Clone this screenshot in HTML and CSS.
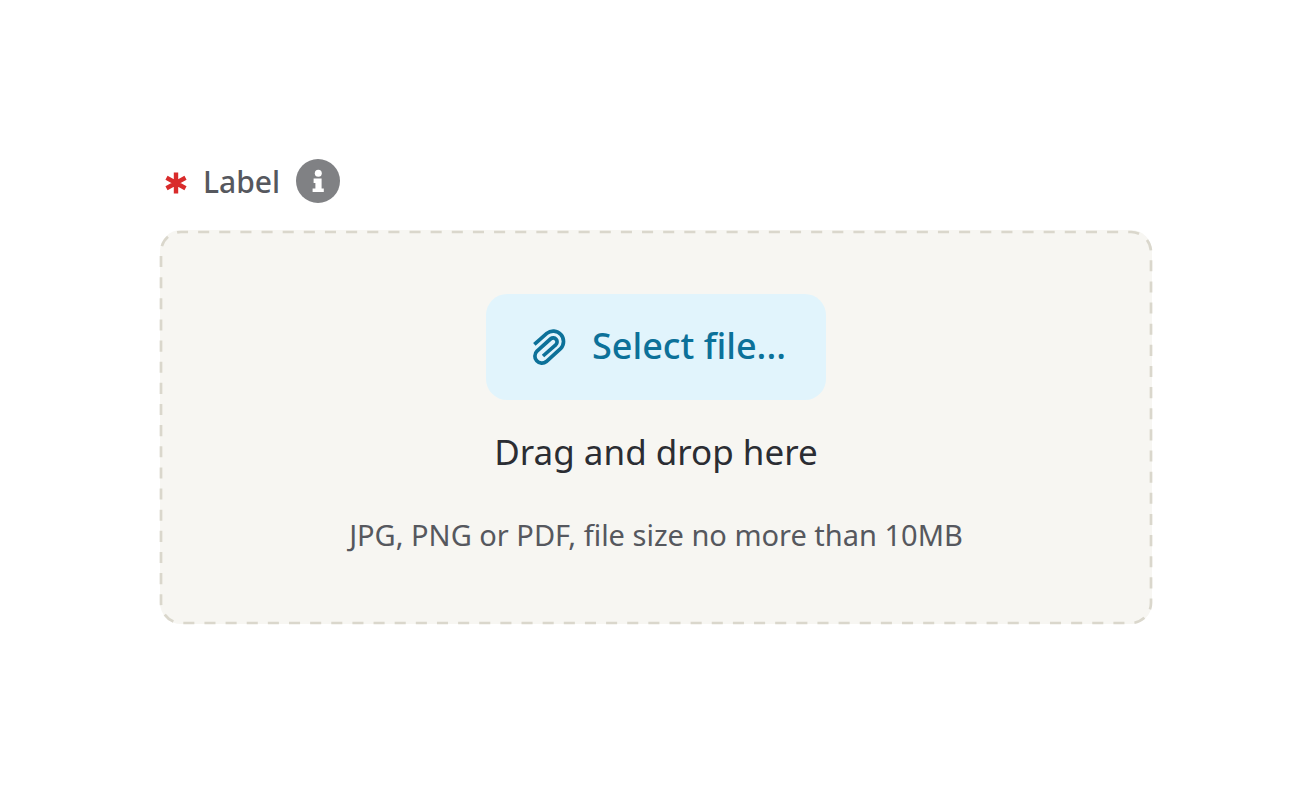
FILE: index.html
```
<!DOCTYPE html>
<html lang="en">
<head>
  <meta charset="UTF-8">
  <meta name="viewport" content="width=device-width, initial-scale=1.0">
  <title>File upload</title>
  <link rel="stylesheet" href="styles.css">
</head>
<body>
  <main class="upload">
    <div class="upload-header">
      <svg class="required-icon" viewBox="0 0 22 26" aria-hidden="true">
        <path d="M11 4.5V25.5M1.5 9.8L20.5 20.2M20.5 9.8L1.5 20.2"/>
      </svg>
      <label for="file">Label</label>
      <button type="button" class="info" aria-label="More information">
        <svg viewBox="0 0 44 44" aria-hidden="true">
          <circle cx="22" cy="22" r="22" fill="#808184"/>
          <circle cx="22.3" cy="14.3" r="3.5" fill="#fff"/>
          <path d="M17.6 19.6H25.6V29.4H27.8V33H16.6V29.4H19.4V24H17.6Z" fill="#fff"/>
        </svg>
      </button>
    </div>
    <div class="dropzone" id="dropzone">
      <svg class="outline" aria-hidden="true">
        <rect width="100%" height="100%" rx="20" pathLength="2709"/>
      </svg>
      <input type="file" id="file" accept=".jpg,.png,.pdf" required hidden>
      <button type="button" class="select-file" id="select">
        <svg class="clip" viewBox="0 0 150 150" aria-hidden="true">
          <path d="M28 73L65.3 40A31 31 0 0 1 106.7 86L64 124.5A20.9 20.9 0 0 1 36 93.5L77.2 56.3A11.7 11.7 0 0 1 92.8 73.7L54 108"/>
        </svg>
        <span>Select file...</span>
      </button>
      <p class="drag-text">Drag and drop here</p>
      <p class="hint">JPG, PNG or PDF, file size no more than 10MB</p>
    </div>
  </main>

  <script>
    const input = document.getElementById("file");
    const dropzone = document.getElementById("dropzone");

    document.getElementById("select").addEventListener("click", () => input.click());
    dropzone.addEventListener("dragover", e => e.preventDefault());
    dropzone.addEventListener("drop", e => {
      e.preventDefault();
      input.files = e.dataTransfer.files;
    });
  </script>
</body>
</html>
```
FILE: styles.css
```
* { box-sizing: border-box; margin: 0; padding: 0; }
body {
  font-family: "Noto Sans", sans-serif;
  background-color: #fff;
  color: #2b2d33;
  padding: 156px 160px;
}
.upload-header {
  display: flex;
  align-items: center;
  gap: 16px;
  height: 50px;
  padding-left: 5px;
  margin-bottom: 24px;
}
.upload-header label {
  font-size: 30px;
  font-weight: 500;
  color: #56585e;
}
.required-icon {
  width: 22px;
  height: 26px;
  fill: none;
  stroke: #d92b2b;
  stroke-width: 4.4;
}
.info {
  width: 44px;
  height: 44px;
  border: none;
  background: none;
}
.info svg { display: block; }
.dropzone {
  position: relative;
  display: flex;
  flex-direction: column;
  align-items: center;
  padding: 64px 24px 65px;
  border-radius: 21px;
  background-color: #f7f6f2;
}
.outline {
  position: absolute;
  inset: 2px 1px 1px;
  width: calc(100% - 2px);
  height: calc(100% - 3px);
  overflow: visible;
  pointer-events: none;
}
.outline rect {
  fill: none;
  stroke: #dad7cc;
  stroke-width: 2.7;
  stroke-dasharray: 11 10;
  stroke-dashoffset: 4;
}
.select-file {
  display: flex;
  align-items: center;
  gap: 17px;
  min-width: 340px;
  height: 106px;
  padding: 0 40px 4px 39px;
  border: none;
  border-radius: 21px;
  background-color: #e1f4fc;
  color: #0c7199;
  font-family: inherit;
  font-size: 36px;
  font-weight: 500;
  cursor: pointer;
}
.clip {
  width: 50px;
  height: 50px;
  fill: none;
  stroke: currentColor;
  stroke-width: 11;
}
.drag-text {
  margin-top: 26px;
  font-size: 35px;
  line-height: 52px;
}
.hint {
  margin-top: 33px;
  font-size: 29px;
  line-height: 48px;
  color: #56585e;
}
```
